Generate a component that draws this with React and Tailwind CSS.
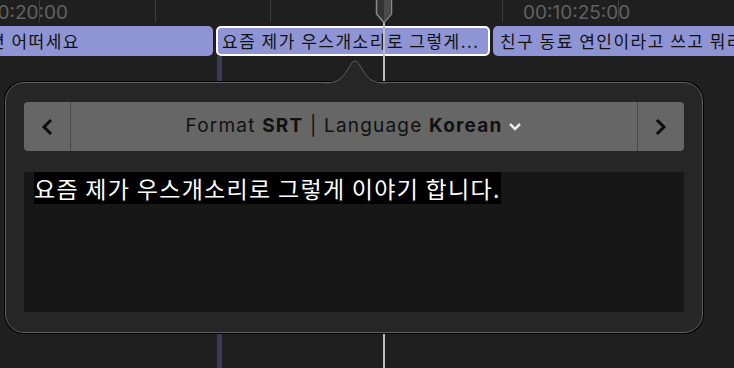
import React from "react"

const ko = { fontFamily: '"Noto Sans CJK KR", "Noto Sans", sans-serif' }
const ui = { fontFamily: 'Inter, "Noto Sans", sans-serif' }

const ticks = [39, 155, 270, 502, 618]

function Chevron({ dir }) {
  return (
    <svg width="14" height="18" viewBox="0 0 14 18">
      <polyline
        points={dir === "left" ? "10,3 4,9 10,15" : "4,3 10,9 4,15"}
        fill="none"
        stroke="#0d0d0d"
        strokeWidth="3"
        strokeLinecap="square"
      />
    </svg>
  )
}

export default function App() {
  return (
    <div className="relative w-[734px] h-[368px] overflow-hidden bg-[#1f1f1f]" style={ui}>
      {/* ruler ticks */}
      {ticks.map((x) => (
        <div key={x} className="absolute top-0 h-[22px] w-px bg-[#3d3d3d]" style={{ left: x }} />
      ))}

      {/* timecodes */}
      <div className="absolute top-[1px] right-[666px] text-[19px] leading-[24px] text-[#616161]">00:20:00</div>
      <div className="absolute top-[1px] left-[523px] text-[19px] leading-[24px] text-[#616161]">00:10:25:00</div>

      {/* clip start marker */}
      <div className="absolute left-[217px] top-[56px] bottom-0 w-[5px] bg-[#3a3b54]" />

      {/* subtitle clips */}
      <div className="absolute top-[26px] left-0 right-0 flex h-[30px] gap-[3px]" style={ko}>
        <div className="ml-[-40px] w-[253px] shrink-0 rounded-[5px] bg-[#8e94d4] flex items-center justify-end pr-[133px] overflow-hidden">
          <span className="text-[17px] tracking-[1.5px] text-[#111] whitespace-nowrap">하면 어떠세요</span>
        </div>
        <div className="w-[274px] shrink-0 rounded-[5px] border-[2.5px] border-white bg-[#8e94d4] flex items-center pl-[4px] overflow-hidden">
          <span className="text-[17px] tracking-[1.5px] text-[#111] whitespace-nowrap">요즘 제가 우스개소리로 그렇게...</span>
        </div>
        <div className="flex-1 rounded-l-[5px] bg-[#8e94d4] flex items-center pl-[7px] overflow-hidden">
          <span className="text-[17px] tracking-[1.5px] text-[#111] whitespace-nowrap">친구 동료 연인이라고 쓰고 뭐라</span>
        </div>
      </div>

      {/* playhead */}
      <div className="absolute left-[383px] top-[20px] bottom-0 w-[1.5px] bg-[#bdbdbd]" />
      <svg className="absolute left-[375px] top-0" width="18" height="24" viewBox="0 0 18 24">
        <path d="M1.5,0 L1.5,14 L9,22.5 L16.5,14 L16.5,0" fill="#333" stroke="#8a8a8a" strokeWidth="1.5" />
        <path d="M9,0 L9,22 L16,14 L16,0 Z" fill="#4a4a4a" />
      </svg>

      {/* popover */}
      <div className="absolute left-[5px] top-[82px] w-[698px] h-[251px] rounded-[19px] border border-[#5e5e5e] bg-[#262626] shadow-[0_0_0_1px_#000] px-[18px] pt-[19px] pb-[20px] flex flex-col gap-[21px]">
        <svg className="absolute left-[318px] top-[-25px]" width="62" height="27" viewBox="0 0 62 27">
          <path d="M0,25 C14,25 18,21 24,11 L27,6 Q31,0 35,6 L38,11 C44,21 48,25 62,25 L62,27 L0,27 Z" fill="#262626" />
          <path d="M0,25 C14,25 18,21 24,11 L27,6 Q31,0 35,6 L38,11 C44,21 48,25 62,25" fill="none" stroke="#5e5e5e" strokeWidth="1" />
        </svg>

        {/* format toolbar */}
        <div className="flex h-[49px] shrink-0 rounded-[4px] bg-[#666] overflow-hidden">
          <div className="w-[47px] flex items-center justify-center border-r-[1.5px] border-[#474747]">
            <Chevron dir="left" />
          </div>
          <div className="flex-1 flex items-center justify-center gap-[6px] text-[19px] tracking-[1.2px] text-[#111]">
            <span>
              Format <b className="font-bold">SRT</b> | Language <b className="font-bold">Korean</b>
            </span>
            <svg width="14" height="10" viewBox="0 0 14 10">
              <polyline points="2,2 7,7 12,2" fill="none" stroke="#e8e8e8" strokeWidth="2.5" />
            </svg>
          </div>
          <div className="w-[47px] flex items-center justify-center border-l-[1.5px] border-[#474747]">
            <Chevron dir="right" />
          </div>
        </div>

        {/* subtitle text */}
        <div className="flex-1 bg-[#171717] pl-[10px]" style={ko}>
          <span className="inline-block bg-black text-white text-[23px] tracking-[1.3px] leading-[32px]">
            요즘 제가 우스개소리로 그렇게 이야기 합니다.
          </span>
        </div>
      </div>
    </div>
  )
}
